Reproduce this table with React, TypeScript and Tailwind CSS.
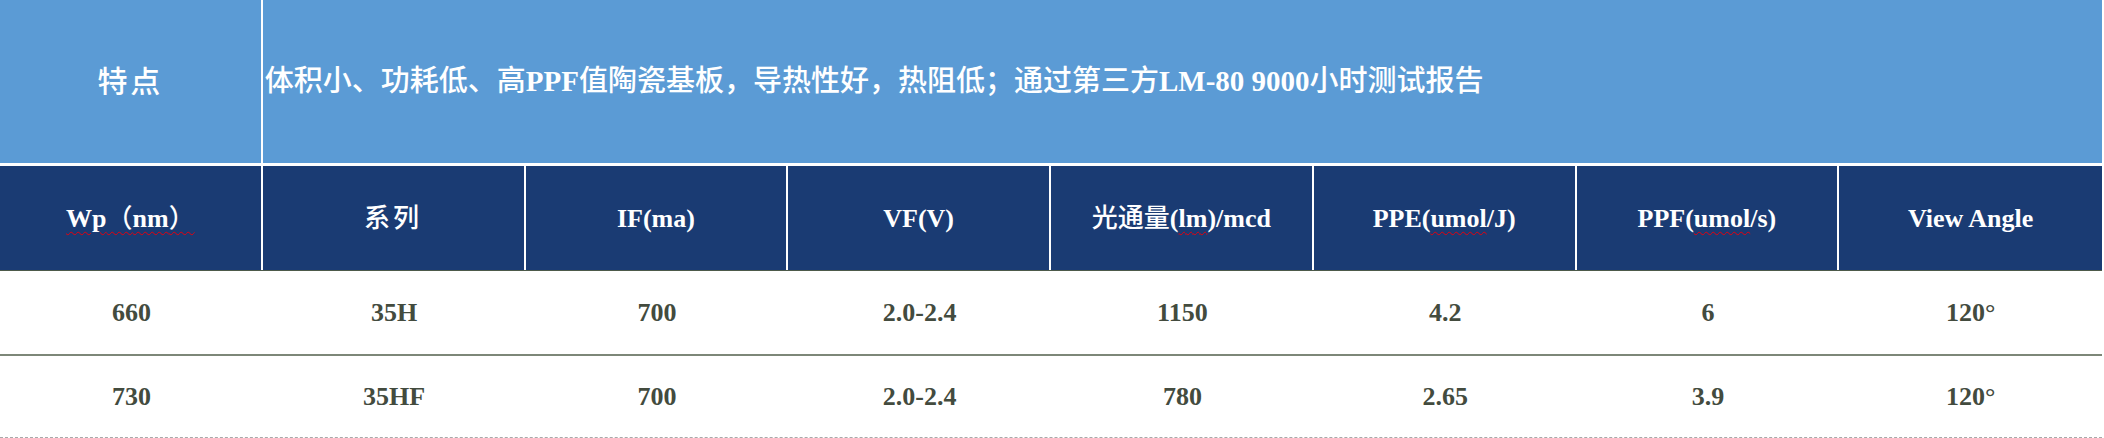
const font = { fontFamily: '"Liberation Serif", "Noto Sans CJK SC", serif' }

// CJK glyphs in the reference are lighter than the bold Latin, so give them their own weight
function Mixed({ text }: { text: string }) {
  const parts = text.split(/([\u3000-\u303f\u4e00-\u9fff\uff00-\uffef]+)/)
  return (
    <>
      {parts.map((p, i) =>
        /[\u3000-\u303f\u4e00-\u9fff\uff00-\uffef]/.test(p) ? (
          <span key={i} className="font-medium">
            {p}
          </span>
        ) : (
          <span key={i}>{p}</span>
        ),
      )}
    </>
  )
}

const squiggle = "underline decoration-wavy decoration-red-600 decoration-1 underline-offset-4"

const headers: React.ReactNode[] = [
  <span className={squiggle}>
    Wp<span className="font-medium">（</span>nm<span className="font-medium">）</span>
  </span>,
  <span className="font-medium tracking-[3px]">系列</span>,
  "IF(ma)",
  "VF(V)",
  <>
    <span className="font-medium">光通量</span>(<span className={squiggle}>lm</span>)/mcd
  </>,
  <>
    PPE(<span className={squiggle}>umol</span>/J)
  </>,
  <>
    PPF(<span className={squiggle}>umol</span>/s)
  </>,
  "View Angle",
]

const rows = [
  ["660", "35H", "700", "2.0-2.4", "1150", "4.2", "6", "120°"],
  ["730", "35HF", "700", "2.0-2.4", "780", "2.65", "3.9", "120°"],
]

export default function App() {
  return (
    <div className="w-[2104px] h-[438px] bg-white overflow-hidden" style={font}>
      <div className="w-[2102px] flex flex-col">
        {/* 特点 row */}
        <div className="grid grid-cols-8 h-[163px] bg-[#5b9bd5] text-white font-bold">
          <div className="col-span-1 flex items-center justify-center border-r-2 border-white text-[30px] tracking-[3px] font-medium">
            特点
          </div>
          <div className="col-span-7 flex items-center pl-[2px] text-[29px] whitespace-nowrap">
            <Mixed text="体积小、功耗低、高PPF值陶瓷基板，导热性好，热阻低；通过第三方LM-80 9000小时测试报告" />
          </div>
        </div>
        <div className="h-[3px] bg-white" />

        {/* header */}
        <div className="grid grid-cols-8 h-[105px] bg-[#1a3b73] text-white font-bold text-[26px] border-b border-[#4d5a4a]">
          {headers.map((h, i) => (
            <div
              key={i}
              className={
                "flex items-center justify-center whitespace-nowrap " +
                (i < 7 ? "border-r-2 border-white" : "")
              }
            >
              {h}
            </div>
          ))}
        </div>

        {/* data rows */}
        {rows.map((r, ri) => (
          <div
            key={ri}
            className={
              "grid grid-cols-8 text-[26px] font-bold text-[#434b3e] " +
              (ri === 0
                ? "h-[85px] border-b-2 border-[#7d8778]"
                : "h-[82px] border-b border-dashed border-[#a9a9a9]")
            }
          >
            {r.map((c, ci) => (
              <div key={ci} className="flex items-center justify-center">
                {c}
              </div>
            ))}
          </div>
        ))}
      </div>
    </div>
  )
}
